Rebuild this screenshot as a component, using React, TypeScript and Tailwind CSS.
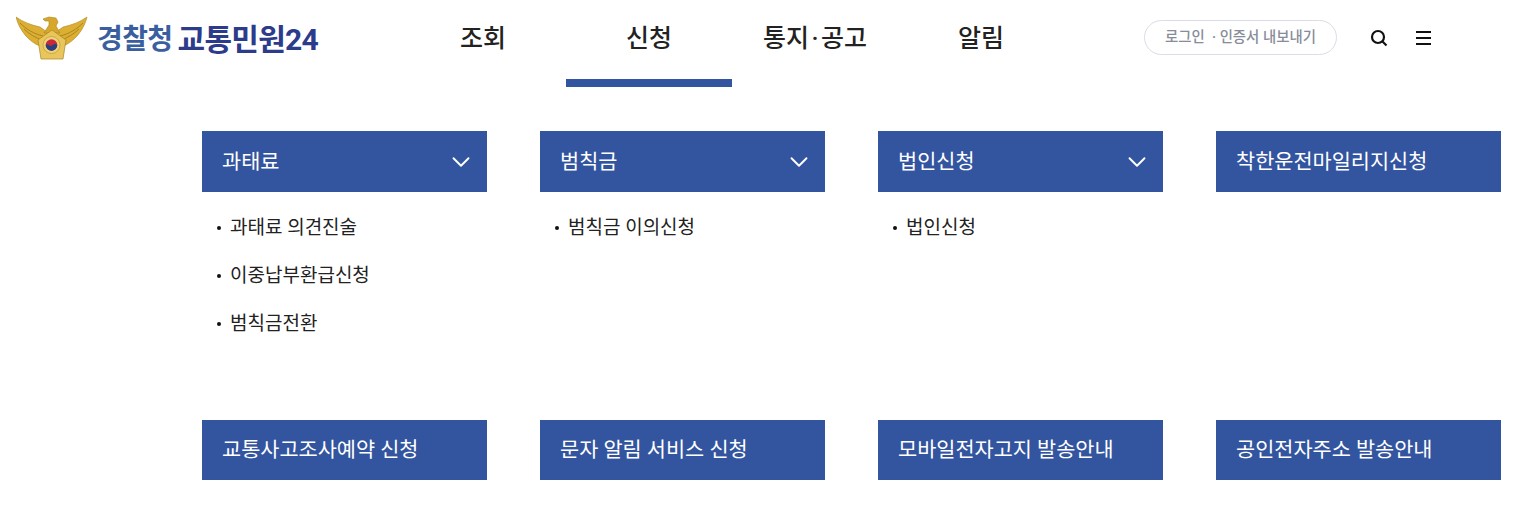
import { ChevronDown } from "lucide-react";

const KR = "font-['Roboto','Noto_Sans_CJK_KR',sans-serif]";

const navItems = ["조회", "신청", "통지·공고", "알림"];

type CardData = { title: string; arrow?: boolean; links?: string[] };

const topCards: CardData[] = [
  { title: "과태료", arrow: true, links: ["과태료 의견진술", "이중납부환급신청", "범칙금전환"] },
  { title: "범칙금", arrow: true, links: ["범칙금 이의신청"] },
  { title: "법인신청", arrow: true, links: ["법인신청"] },
  { title: "착한운전마일리지신청" },
];

const bottomCards: CardData[] = [
  { title: "교통사고조사예약 신청" },
  { title: "문자 알림 서비스 신청" },
  { title: "모바일전자고지 발송안내" },
  { title: "공인전자주소 발송안내" },
];

function Emblem() {
  return (
    <svg width="72" height="44" viewBox="0 0 72 44" className="shrink-0">
      {/* wings */}
      <path d="M0 1 C7 6 15 9 24 11 L31 16 L30 27 L24 30 C13 26 3 14 0 1Z" fill="#dcae32" stroke="#a98424" strokeWidth="0.6" />
      <path d="M71 1 C64 6 56 9 47 11 L40 16 L41 27 L47 30 C58 26 68 14 71 1Z" fill="#dcae32" stroke="#a98424" strokeWidth="0.6" />
      <path d="M4 7 C10 13 18 18 27 20 M67 7 C61 13 53 18 44 20 M8 13 C13 18 20 22 26 24 M63 13 C58 18 51 22 45 24" fill="none" stroke="#9c7a20" strokeWidth="0.8" />
      {/* head */}
      <path d="M27 3 L33 1 L40 2 L42 6 L40 10 L44 17 L28 17 L33 9 L33 5 L29 5Z" fill="#d7a72c" stroke="#a98424" strokeWidth="0.6" />
      {/* shield */}
      <path d="M22 24 L36 14 L50 24 L47 43 L25 43Z" fill="#e8c65c" stroke="#a98424" strokeWidth="0.7" />
      <circle cx="35.5" cy="29" r="8.5" fill="#eed27a" stroke="#b8922e" strokeWidth="0.6" />
      <circle cx="35.5" cy="29" r="5.8" fill="#c8283a" />
      <path d="M29.7 29 C31.5 26.5 34 31.5 36 29.5 C38 28 39.5 27.5 41.3 29 A5.8 5.8 0 0 1 29.7 29Z" fill="#27407f" />
    </svg>
  );
}

function Logo() {
  return (
    <div className="flex w-[400px] items-start pl-[16px] pt-[16px]">
      <Emblem />
      <div className="ml-[9px] mt-[8px] flex items-center font-bold leading-[32px]">
        <span className="text-[28px] tracking-[-0.6px] text-[#3a5f9f]">경찰청</span>
        <span className="ml-[5px] text-[30px] tracking-[-0.7px] text-[#2d3b8b]">교통민원24</span>
      </div>
    </div>
  );
}

function Header() {
  return (
    <header className="flex h-[87px] items-start">
      <Logo />
      <nav className="flex">
        {navItems.map((item) => (
          <a
            key={item}
            className={[
              "flex h-[87px] w-[166px] justify-center whitespace-pre border-b-8 pt-[21px] text-[25px] font-medium leading-[36px] text-[#222]",
              item === "신청" ? "border-[#33559f]" : "border-transparent",
            ].join(" ")}
          >
            {item === "통지·공고" ? "통지\u200a·\u200a공고" : item}
          </a>
        ))}
      </nav>
      <button className="ml-[80px] mt-[20px] flex h-[35px] w-[193px] items-center justify-center rounded-full border border-[#dcdce8] pt-px text-[14.4px] font-medium text-[#888c99]">
        로그인 &nbsp;· 인증서 내보내기
      </button>
      <svg width="18" height="18" viewBox="0 0 18 18" className="ml-[33px] mt-[29px]" fill="none" stroke="#111" strokeWidth="2.2">
        <circle cx="8" cy="8" r="6" />
        <path d="M12.5 12.5 L16.5 16.5" />
      </svg>
      <div className="ml-[28px] mt-[31px] flex h-[14px] w-[15px] flex-col justify-between">
        <span className="h-[2px] bg-[#111]" />
        <span className="h-[2px] bg-[#111]" />
        <span className="h-[2px] bg-[#111]" />
      </div>
    </header>
  );
}

function Card({ title, arrow, links, tall }: Readonly<CardData & { tall?: boolean }>) {
  return (
    <div className="w-[285px]">
      <div
        className={[
          "flex items-center justify-between bg-[#33559f] pl-[20px] pr-[11px] text-[20.8px] text-white",
          tall ? "h-[61px]" : "h-[60px]",
        ].join(" ")}
      >
        <span className="pt-[2px]">{title}</span>
        {arrow && <ChevronDown size={30} strokeWidth={1.5} color="#fff" />}
      </div>
      {links && (
        <ul className="pt-[12px]">
          {links.map((link) => (
            <li key={link} className="flex h-[48px] items-center pl-[15px] text-[19px] text-[#222]">
              <span className="mr-[9px] h-[4px] w-[4px] rounded-full bg-[#111]" />
              {link}
            </li>
          ))}
        </ul>
      )}
    </div>
  );
}

export default function App() {
  return (
    <div className={`h-[527px] w-[1537px] overflow-hidden bg-white ${KR}`}>
      <Header />
      <main className="pl-[202px] pt-[44px]">
        <div className="flex h-[289px] items-start gap-[53px]">
          {topCards.map((c) => (
            <Card key={c.title} tall {...c} />
          ))}
        </div>
        <div className="flex items-start gap-[53px]">
          {bottomCards.map((c) => (
            <Card key={c.title} {...c} />
          ))}
        </div>
      </main>
    </div>
  );
}
